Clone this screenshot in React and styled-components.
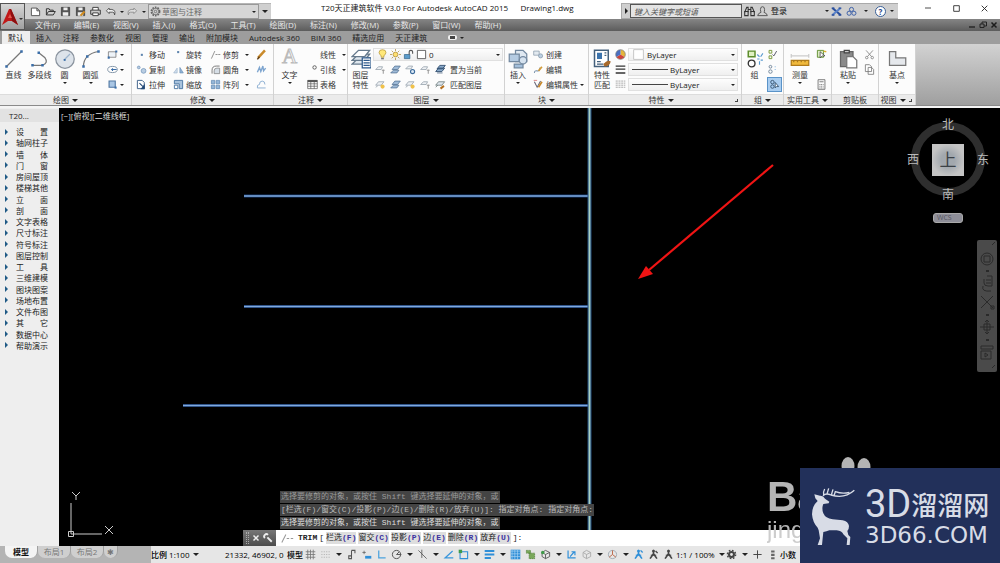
import React from "react";
import styled, { createGlobalStyle, css } from "styled-components";

const sans = `"Open Sans", "Noto Sans CJK SC", sans-serif`;
const mono = `"Liberation Mono", "Noto Sans CJK SC", monospace`;

const Global = createGlobalStyle`
  *, *::before, *::after { box-sizing: border-box; }
  html, body { margin: 0; background: #000; }
  body { font-family: ${sans}; font-size: 8px; line-height: 10px; color: #333; overflow: hidden; }
  button, input, select { font: inherit; color: inherit; margin: 0; padding: 0; border: 0; background: none; outline: 0; border-radius: 0; }
  ul { list-style: none; margin: 0; padding: 0; }
`;

/* ---------- icons ---------- */

const paper = { fill: "#fff", stroke: "#555" };
const sheets = (
  <g fill="#dfe7ee" stroke="#667a8c">
    <path d="M1 12l5-5h9l-4 5z" />
    <path d="M1 9l5-5h9l-4 5z" />
    <path d="M1 6l5-5h9l-4 5z" fill="#fff" />
  </g>
);
const person = (c) => (
  <g fill={c} stroke={c}>
    <path d="M8 2v6M8 7l-5 7M8 7l5 7" strokeWidth="2.4" fill="none" />
    <path d="M4 9h8" strokeWidth="1.5" />
    <circle cx="8" cy="3" r="1.6" />
  </g>
);
const cube = (c) => <path d="M3 5l5-3 6 3v6l-6 3-5-3zM3 5l5 3 6-3M8 8v6" fill="none" stroke={c} strokeWidth="1.3" />;

const glyphs = {
  new: <path d="M2 3h8l4 4v7H2zM10 3v4h4" {...paper} strokeWidth="1.4" />,
  open: <path d="M2 13V4h4l1 2h5v2M2 13l3-5h10l-3 5z" fill="none" stroke="#333" strokeWidth="1.4" />,
  save: (
    <g>
      <path d="M2 2h12v12H2z" fill="#555" stroke="#333" />
      <path d="M5 2h6v4H5zM4 9h8v5H4z" fill="#eee" />
    </g>
  ),
  saveas: (
    <g>
      <path d="M2 2h12v12H2z" fill="#555" stroke="#333" />
      <path d="M5 2h6v4H5zM4 9h8v5H4z" fill="#eee" />
      <path d="M8 14l6-6" stroke="#d08a1c" strokeWidth="3" />
    </g>
  ),
  print: (
    <g stroke="#333" strokeWidth="1.3">
      <path d="M4 6V2h8v4" fill="#fff" />
      <path d="M1 6h14v6H1z" fill="#ccc" />
      <path d="M4 10h8v4H4z" fill="#fff" />
    </g>
  ),
  undo: <path d="M6 3L2 7l4 4V9h5q3 0 3 4 2-7-4-8H6z" fill="#eee" stroke="#444" strokeWidth="1.2" />,
  redo: <path d="M10 3l4 4-4 4V9H5q-3 0-3 4-2-7 4-8h4z" fill="#ddd" stroke="#888" strokeWidth="1.2" />,
  gear: (
    <g fill="none" stroke="#666">
      <circle cx="8" cy="8" r="6" strokeWidth="2.4" strokeDasharray="2.4 1.4" />
      <circle cx="8" cy="8" r="4.6" strokeWidth="1.2" />
      <circle cx="8" cy="8" r="1.8" strokeWidth="1.2" />
    </g>
  ),
  gearSolid: (
    <g fill="none" stroke="#444">
      <circle cx="8" cy="8" r="3.6" strokeWidth="3" />
      <circle cx="8" cy="8" r="6" strokeWidth="2" strokeDasharray="2.4 2.3" />
    </g>
  ),
  binoculars: (
    <g fill="none" stroke="#333" strokeWidth="1.5">
      <path d="M1 9l3-7h2v7M15 9l-3-7h-2v7M6 5h4" />
      <path d="M1 8h5v6H1zM10 8h5v6h-5z" />
    </g>
  ),
  user: (
    <g fill="none" stroke="#555" strokeWidth="1.4">
      <path d="M5 5q0-4 3-4t3 4-1 4q5 2 5 5H1q0-3 5-5-1-1-1-4z" />
    </g>
  ),
  exchange: (
    <g strokeWidth="3">
      <path d="M2 3l12 10" stroke="#2a4f9c" />
      <path d="M14 3L2 13" stroke="#5a82c8" />
      <path d="M1 3h4M11 3h4M1 13h4M11 13h4" stroke="#2a4f9c" strokeWidth="2" />
    </g>
  ),
  a360: (
    <g fill="none" stroke="#3b5fa8" strokeWidth="1.4">
      <circle cx="8" cy="5" r="3" /><circle cx="4.5" cy="10.5" r="3" /><circle cx="11.500" cy="10.500" r="3" />
    </g>
  ),
  line: (
    <g>
      <path d="M2 14L14 2" stroke="#777" />
      <path d="M1 13h2v2H1zM13 1h2v2h-2z" fill="#3b6ea8" />
    </g>
  ),
  polyline: (
    <g>
      <path d="M2 13h8q5-2 2-6L7 3" stroke="#777" fill="none" />
      <path d="M1 12h2v2H1zM9 12h2v2H9zM6 2h2v2H6z" fill="#3b6ea8" />
    </g>
  ),
  circle: (
    <g>
      <circle cx="8" cy="8" r="7.400" fill="#dde3ea" stroke="#8a939e" />
      <path d="M7 9l5-5" stroke="#9db4cc" />
      <path d="M7 8h1.500v1.500H7z" fill="#3b6ea8" />
    </g>
  ),
  arc: (
    <g>
      <path d="M2 14Q2 4 14 2" stroke="#777" fill="none" />
      <path d="M1 13h2v2H1zM4 5h2v2H4zM13 1h2v2h-2z" fill="#3b6ea8" />
    </g>
  ),
  rect: (
    <g>
      <path d="M2 4h11v8H2z" fill="#eef3f8" stroke="#666" />
      <path d="M1 11h3v3H1zM12 2h3v3h-3z" fill="#3b6ea8" />
    </g>
  ),
  ellipse: (
    <g fill="none" stroke="#7b8fa3">
      <ellipse cx="8" cy="8" rx="7" ry="4.500" strokeWidth="1.300" />
      <path d="M8 6v4M6 8h8" stroke="#3b6ea8" strokeWidth="1.600" />
    </g>
  ),
  hatch: (
    <g>
      <path d="M3 3h9v9H3z" fill="#a9c6e4" stroke="#4f76a2" strokeWidth="1.600" />
      <path d="M11 11h3v3h-3z" fill="#3b6ea8" />
    </g>
  ),
  move: <path d="M7 7h3v3H7z" fill="#5d84ad" />,
  rotate: <path d="M6 3h3v3H6z" fill="#5d84ad" />,
  trim: <path d="M2 14L7 3M8 8h3M12 8h3" stroke="#888" strokeWidth="1.300" />,
  pencil: (
    <g>
      <path d="M3 13l10-11" stroke="#c98a2b" strokeWidth="3.600" />
      <path d="M2 15l3-4" stroke="#5b3a12" strokeWidth="2" />
    </g>
  ),
  copy: (
    <g fill="#b9cde2" stroke="#6a8fb6">
      <circle cx="4" cy="5" r="2" /><circle cx="11" cy="10" r="3.500" />
    </g>
  ),
  mirror: (
    <g>
      <path d="M1 13l5-7v7z" fill="#d3e1ef" stroke="#9db5cc" />
      <path d="M15 13l-5-8v8z" fill="#8fb3d7" stroke="#6d92b8" />
    </g>
  ),
  fillet: (
    <g fill="none" stroke="#777">
      <path d="M3 14V9q0-6 6-6h5" strokeWidth="1.400" /><path d="M6 14v-4q0-4 4-4h4v8z" fill="#d6dee6" />
    </g>
  ),
  explode: <path d="M2 12l3-7 2 6 3-8 1 7 3-4" fill="none" stroke="#7ea5cf" strokeWidth="2" />,
  stretch: (
    <g>
      <path d="M2 2h7l3 3v9H2z" fill="#fff" stroke="#3f628a" strokeWidth="1.400" />
      <path d="M5 6l7 7M12 9v5H8z" fill="#234a78" stroke="#234a78" strokeWidth="1.500" />
    </g>
  ),
  scale: (
    <g stroke="#45719f" strokeWidth="1.300">
      <path d="M2 2h12v12H9V7H2z" fill="#a9c3dd" /><path d="M2 9h5v5H2z" fill="#fff" />
    </g>
  ),
  array: <path d="M2 2h5v5H2zM9 2h5v5H9zM2 9h5v5H2zM9 9h5v5H9z" fill="#94b6d8" stroke="#5a83ad" />,
  offset: <path d="M2 13q-1-5 3-5 0-5 4-5t4 5M2 13h12" fill="none" stroke="#8fb0d2" strokeWidth="1.400" />,
  leader: <circle cx="11" cy="5" r="2.500" fill="none" stroke="#555" strokeWidth="1.300" />,
  table: (
    <g fill="none" stroke="#555">
      <path d="M1 2h14v12H1z" fill="#fff" /><path d="M1 3h14" strokeWidth="3" /><path d="M1 7h14M1 10.500h14M5.500 3v11M10.500 3v11" />
    </g>
  ),
  layers: (
    <g>
      {sheets}
      <path d="M9 7h7v8H9z" fill="#fff" stroke="#2e5a8c" /><path d="M10 9h5M10 11h5M10 13h5" stroke="#2e5a8c" />
    </g>
  ),
  sheetBlue: <path d="M1 13l4-4h8l-3 4zM3 8l4-5h8l-4 5z" fill="#9fbbd8" stroke="#48688a" />,
  sheetKey: (
    <g>
      <path d="M1 8l4-4h6l-2 4z" fill="#eef1f4" stroke="#8794a1" />
      <path d="M12 8v6M10 9h4" stroke="#999" strokeWidth="1.500" />
    </g>
  ),
  sheetSnow: (
    <g>
      <path d="M1 7l4-4h6l-2 4z" fill="#eef1f4" stroke="#8794a1" />
      <circle cx="11" cy="11" r="3" fill="#dce9f5" stroke="#3c6b9c" strokeWidth="1.600" />
    </g>
  ),
  sheetSun: (
    <g>
      <path d="M1 9l4-5h8l-4 5zM1 12l3-2" fill="#eef1f4" stroke="#8794a1" />
      <circle cx="11" cy="11" r="3" fill="#f0c14a" />
    </g>
  ),
  sheetStack: (
    <g>
      <path d="M1 11l4-5h9l-4 5zM3 7l4-5h8l-4 5z" fill="#8aaacb" stroke="#2e4c6d" strokeWidth="1.300" />
      <path d="M3 13h8" stroke="#2e4c6d" />
    </g>
  ),
  sheetMatch: (
    <g>
      <path d="M1 9l4-5h9l-4 5zM1 12l3-3" fill="#dfe7ee" stroke="#566" /><path d="M8 14l5-4" stroke="#b5701f" strokeWidth="3" />
    </g>
  ),
  bulb: (
    <g>
      <path d="M8 1q5 0 5 4 0 2-3 5v2H6v-2Q3 7 3 5q0-4 5-4z" fill="#ffe87a" stroke="#b08f2b" /><path d="M6 13h4v2H6z" fill="#777" />
    </g>
  ),
  sun: (
    <g stroke="#a5822d">
      <circle cx="8" cy="8" r="3.500" fill="#ffe070" />
      <path d="M8 0v3M8 13v3M0 8h3M13 8h3M2.500 2.500l2 2M11.500 11.500l2 2M13.500 2.500l-2 2M4.500 11.500l-2 2" />
    </g>
  ),
  lock: (
    <g>
      <path d="M2 8h8v6H2z" fill="#5c9ccb" stroke="#2e6189" /><path d="M9 8V4q0-2 2.500-2T14 4v3" fill="none" stroke="#555" strokeWidth="1.600" />
    </g>
  ),
  swatch: <path d="M2 2h12v12H2z" fill="#fff" stroke="#555" strokeWidth="1.300" />,
  swatchSoft: <path d="M2 2h12v12H2z" fill="#fff" stroke="#bbb" />,
  insert: (
    <g stroke="#7389a0">
      <path d="M6 1h6l3 3v6H6z" fill="#dfe8f1" />
      <path d="M1 4h8v6H1z" fill="#b4cbe2" /><circle cx="12" cy="9" r="3" fill="#d5e2ef" /><path d="M5 12h7v3H5z" fill="#a3bfdb" />
    </g>
  ),
  create: (
    <g stroke="#8294a6">
      <path d="M1 3h8v6H1z" fill="#e3eaf0" /><circle cx="11" cy="10" r="3" fill="#bcd0e3" />
    </g>
  ),
  edit: (
    <g>
      <path d="M2 13q0-4 4-3t4-5" fill="none" stroke="#7a93ad" strokeWidth="1.500" /><path d="M8 10l5-6" stroke="#d19b3a" strokeWidth="2.500" />
    </g>
  ),
  attr: (
    <g fill="none">
      <path d="M2 4l4 8 5-9" stroke="#667" strokeWidth="1.500" /><path d="M8 12l5-8" stroke="#c98a2b" strokeWidth="2.500" /><path d="M1 2h5" stroke="#c55" />
    </g>
  ),
  match: (
    <g>
      <path d="M2 1h11v13H2z" fill="#fff" stroke="#44607c" strokeWidth="1.200" />
      <path d="M4 3h4v5H4z" fill="#3c74ad" /><path d="M10 3h1.500M10 5h1.500M4 10h3M4 12h5" stroke="#44607c" />
      <path d="M9 12q4-4 6-2-1 4-5 4z" fill="#a8692a" />
    </g>
  ),
  wheel: (
    <g>
      <path d="M8 8V1a7 7 0 0 1 6 10.500z" fill="#e5b53a" /><path d="M8 8l6 3.500A7 7 0 0 1 2 11.500z" fill="#d0433a" />
      <path d="M8 8L2 11.500A7 7 0 0 1 8 1z" fill="#4a6fc0" /><circle cx="8" cy="8" r="7" fill="none" stroke="#777" />
    </g>
  ),
  weights: <path d="M1 3h14M1 7.500h14M1 13h14" stroke="#333" strokeWidth="2" />,
  types: <path d="M1 3h14M1 6h14M1 9h14M1 12h14" stroke="#888" strokeDasharray="3 1" />,
  group: (
    <g fill="none">
      <path d="M2 1h6v5H2z" fill="#dff0c2" stroke="#5b8c2a" strokeWidth="1.300" /><circle cx="5" cy="12" r="3" stroke="#333" strokeWidth="1.200" />
      <path d="M10 4l2 2M15 3l-2 3M10 8h2M15 9h-2M12 10v3" stroke="#5a9bd0" />
    </g>
  ),
  groupEdit: (
    <g fill="none">
      <path d="M3 2h4v4H3zM3 10h4v4H3z" stroke="#7a9a3a" strokeWidth="1.400" /><path d="M8 8l2 2 4-7" stroke="#556" strokeWidth="1.400" />
    </g>
  ),
  ungroup: (
    <g fill="none" stroke="#6a7f94" strokeWidth="1.300">
      <circle cx="5" cy="4" r="2" /><circle cx="5" cy="11" r="2.500" /><path d="M11 4h2M11 8h2" stroke="#9cc3e4" />
    </g>
  ),
  groupSel: (
    <g fill="none" stroke="#34506c" strokeWidth="1.300">
      <circle cx="5" cy="4.500" r="2.500" /><circle cx="5" cy="11" r="2.500" /><path d="M9 5l5 6H11l-2 2z" fill="#fff" />
    </g>
  ),
  measure: (
    <g>
      <path d="M1 4v3M1 5.500h14M15 4v3" stroke="#ccc" /><path d="M1 9h14v4H1z" fill="#f0b93c" stroke="#b07b1b" />
      <path d="M3 9v1.500M6 9v1.500M9 9v1.500M12 9v1.500" stroke="#a87a20" />
    </g>
  ),
  select: (
    <g>
      <path d="M2 2h9v10H2z" fill="#dcecc4" stroke="#5b8c2a" strokeWidth="1.300" /><path d="M6 4l7 6H9l-3 3z" fill="#fff" stroke="#333" /><path d="M11 3l4 1" stroke="#e0b030" strokeWidth="2" />
    </g>
  ),
  calc: (
    <g fill="none" stroke="#666" strokeWidth="1.200">
      <path d="M3 1h10v14H3zM5 4h6" /><path d="M5 8h6M5 10.500h6M5 13h6" strokeDasharray="1.500 1" />
    </g>
  ),
  paste: (
    <g>
      <path d="M2 2h10v12H2z" fill="#8a8a8a" stroke="#666" /><path d="M5 1h4v2H5z" fill="#ccc" stroke="#444" /><path d="M7 6h5l3 3v6H7z" fill="#fff" stroke="#777" />
    </g>
  ),
  cut: (
    <g fill="none" stroke="#888" strokeWidth="1.300">
      <path d="M3 2l8 9M13 2L5 11" /><circle cx="4" cy="12.500" r="1.800" /><circle cx="12" cy="12.500" r="1.800" />
    </g>
  ),
  copyClip: <path d="M2 1h6l3 3v7H2zM6 5h5l3 3v7H6z" fill="#fff" stroke="#777" strokeWidth="1.200" />,
  base: <path d="M2 2h5v5h8v6H2z" fill="#e5e8ec" stroke="#777" />,
  grid: <path d="M4 1v14M8 1v14M12 1v14M1 4h14M1 8h14M1 12h14" stroke="#777" strokeWidth="1.200" />,
  dots: <path d="M2 4h12M2 8h12M2 12h12" stroke="#aaa" strokeWidth="1.300" strokeDasharray="1.500 2" />,
  infer: <path d="M8 2h5v4M8 2v8M8 10H4v4h4z" fill="none" stroke="#555" strokeWidth="1.500" />,
  dynamic: (
    <g>
      <path d="M2 5h5M4.500 2.500v5" stroke="#555" /><path d="M6 10h9v4H6z" fill="#2f8fd8" />
    </g>
  ),
  ortho: <path d="M4 2v11h10" fill="none" stroke="#4ba2dd" strokeWidth="1.800" />,
  polar: (
    <g fill="none" stroke="#555" strokeWidth="1.400">
      <circle cx="8" cy="8" r="6" /><path d="M8 8h7M8 8l4-4" />
    </g>
  ),
  iso: <path d="M7 1v12M2 2l12 12" stroke="#555" strokeWidth="1.200" />,
  track: <path d="M14 3L3 13h12" fill="none" stroke="#3b97dc" strokeWidth="1.800" />,
  osnap: (
    <g>
      <path d="M3 4h11v10H3z" fill="none" stroke="#2f8fd8" strokeWidth="1.600" /><path d="M1 1h5v5H1z" fill="#3f9a4a" />
    </g>
  ),
  lwt: <path d="M1 3h14M1 8h14M1 13h9" stroke="#2f8fd8" strokeWidth="3" />,
  transparency: (
    <g>
      <path d="M1 1h14v14H1z" fill="#2f8fd8" /><path d="M3 1v14M7 1v14M11 1v14M1 3h14M1 7h14M1 11h14" stroke="#a9d3f2" />
    </g>
  ),
  cycle: <path d="M2 2h6v4H2zM6 6h8v8H6z" fill="#79a85a" stroke="#4c7a34" strokeDasharray="2 1" />,
  osnap3: (
    <g>{cube("#555")}<circle cx="4" cy="5" r="2.500" fill="#3f9a4a" /></g>
  ),
  ducs: <path d="M3 2v11h11M6 11l6-7M8 4h5v5" fill="none" stroke="#2f8fd8" strokeWidth="1.700" />,
  filter: cube("#aaa"),
  gizmo: (
    <g fill="none">
      <circle cx="8" cy="8" r="6" stroke="#8b97a3" /><path d="M8 8V2M8 8l5 4M8 8l-5 4" stroke="#bd6a4b" strokeWidth="1.400" />
    </g>
  ),
  annoBlue: (
    <g>{person("#2f8fd8")}<path d="M11 2l3 3" stroke="#2f8fd8" strokeWidth="2" /></g>
  ),
  annoAuto: (
    <g>{person("#444")}<path d="M11 3l3 3" stroke="#444" strokeWidth="2" /></g>
  ),
  anno: person("#444"),
  plus: <path d="M8 2v12M2 8h12" stroke="#444" strokeWidth="1.400" />,
  units: <path d="M6 2h5v3H6zM6 7h5v3H6zM6 12h5v3H6z" fill="#666" />,
  close: <path d="M3 3l10 10M13 3L3 13" stroke="currentColor" strokeWidth="1.600" />,
  closeBold: <path d="M3 3l10 10M13 3L3 13" stroke="currentColor" strokeWidth="3" />,
  max: <path d="M3 3h10v10H3z" fill="none" stroke="currentColor" strokeWidth="1.500" />,
  min: <path d="M2 8h12" stroke="currentColor" strokeWidth="1.600" />,
  minLow: <path d="M2 12h12" stroke="currentColor" strokeWidth="2.500" />,
  restore: <path d="M2 6h8v7H2zM6 6V2h9v8h-5" fill="none" stroke="currentColor" strokeWidth="1.800" />,
  wrench: <path d="M14 14L7 7M8 3a3.500 3.500 0 1 0-5 5" fill="none" stroke="#eee" strokeWidth="3" />,
  trimCmd: <path d="M1 13L6 3M7 8h3M12 8h3" stroke="#999" strokeWidth="1.300" />,
};

const Glyph = styled.svg`
  width: ${(p) => p.$s}px;
  height: ${(p) => p.$s}px;
  flex: none;
  display: block;
`;
const Icon = ({ n, s = 11 }) => (
  <Glyph $s={s} viewBox="0 0 16 16" aria-hidden="true">{glyphs[n]}</Glyph>
);

const Caret = styled.i`
  flex: none;
  width: 0;
  height: 0;
  border: ${(p) => (p.$big ? 3 : 2)}px solid transparent;
  border-top-color: #222;
  border-bottom: 0;
`;

/* ---------- title and menus ---------- */

const Shell = styled.div`
  display: flex;
  flex-direction: column;
  height: 100vh;
  background: #eee;
`;
const Header = styled.header`
  display: grid;
  grid-template-columns: 25px 1fr;
  grid-template-rows: 19px 12px;
  background: linear-gradient(#fff 0 19px, #6e6e6e 19px);
`;
const AppButton = styled.button`
  grid-row: 1 / 3;
  margin: 3px 0 1px;
  border: 1px solid #555;
  background: linear-gradient(#d6d6d6, #a0a0a0);
  display: flex;
  align-items: center;
  justify-content: center;
`;
const TitleRow = styled.div`
  display: flex;
  min-width: 0;
  padding-top: 3px;
`;
const QuickBar = styled.div`
  display: flex;
  align-items: center;
  background: #cfcfcf;
  padding-left: 3px;
  border-top: 1px solid #b5b5b5;
`;
const QuickButton = styled.button`
  width: ${(p) => p.$w || 15}px;
  height: 15px;
  display: flex;
  align-items: center;
  justify-content: center;
`;
const Workspace = styled.label`
  display: flex;
  align-items: center;
  gap: 1px;
  width: 111px;
  height: 15px;
  margin-left: 1px;
  padding: 0 2px 0 1px;
  border: 1px solid #999;
  background: #d6d6d6;
  color: #666;
`;
const PlainSelect = styled.select`
  appearance: none;
  flex: 1;
  min-width: 0;
  height: 10px;
  line-height: 10px;
`;
const Title = styled.h1`
  flex: 1;
  min-width: 0;
  margin: 0 0 0 50px;
  font-size: 8px;
  font-weight: 400;
  line-height: 10px;
  white-space: pre;
  overflow: hidden;
  color: #111;
`;
const InfoCenter = styled.div`
  display: flex;
  align-items: center;
  width: 277px;
  background: #cfcfcf;
  border: 1px solid #aaa;
  border-right: 0;
`;
const SearchBox = styled.input`
  width: 112px;
  height: 14px;
  padding: 0 3px;
  background: #e4e4e4;
  border: 1px solid #555;
  font-style: italic;
  &::placeholder { color: #555; opacity: 1; }
`;
const SearchToggle = styled.button`
  width: 8px;
  display: flex;
  justify-content: center;
`;
const RightCaret = styled.i`
  width: 0;
  height: 0;
  flex: none;
  border: 3px solid transparent;
  border-left-color: ${(p) => p.$c || "#222"};
  border-right: 0;
`;
const SignIn = styled.button`
  display: flex;
  align-items: center;
  gap: 3px;
  width: 72px;
  color: #111;
  & > :last-child { margin-left: auto; }
`;
const HelpMark = styled.span`
  width: 11px;
  height: 11px;
  border: 1px solid #3a5f96;
  border-radius: 50%;
  background: #fff;
  color: #1f4684;
  font-weight: 700;
  line-height: 9px;
  text-align: center;
`;
const Windowing = styled.div`
  display: flex;
  align-items: flex-start;
  width: 102px;
  padding-left: 16px;
  color: #222;
`;
const WindowButton = styled.button`
  width: 28px;
  height: 10px;
  display: flex;
  justify-content: center;
  align-items: center;
`;
const MenuBar = styled.nav`
  display: flex;
  gap: 14px;
  padding: 0 1px 0 10px;
  line-height: 12px;
  color: #e8e8e8;
  background: linear-gradient(#858585, #5c5c5c);
`;
const MenuButton = styled.button`
  line-height: 12px;
  white-space: nowrap;
`;
const DocButtons = styled.div`
  margin-left: auto;
  display: flex;
  align-items: center;
  color: #1c1c1c;
`;
const DocButton = styled.button`
  width: 11px;
  display: flex;
  justify-content: center;
`;
const TabBar = styled.nav`
  display: flex;
  align-items: center;
  gap: 11px;
  height: 13px;
  flex: none;
  padding-left: 2px;
  background: #9d9d9d;
`;
const Tab = styled.button`
  height: 13px;
  line-height: 13px;
  color: #222;
  white-space: nowrap;
  ${(p) => p.$active && css`
    background: #eee;
    padding: 0 6px;
    margin-right: -5px;
  `}
`;
const TabToggle = styled.button`
  display: flex;
  align-items: center;
  gap: 3px;
  margin-left: 10px;
`;
const TabToggleBox = styled.span`
  width: 9px;
  height: 5px;
  background: #444;
  border: 1px solid #eee;
  border-width: 1px 2px;
  border-radius: 2px;
`;

/* ---------- ribbon ---------- */

const Ribbon = styled.div`
  display: flex;
  flex: none;
  height: 64px;
  padding-bottom: 3px;
  background: linear-gradient(#eee 0 61px, #8a8a8a 61px 62px, #f4f4f4 62px);
`;
const PanelBox = styled.section`
  display: flex;
  flex-direction: column;
  flex: none;
  width: ${(p) => p.$w}px;
  border-right: 1px solid #d2d2d2;
`;
const PanelBody = styled.div`
  flex: 1;
  display: flex;
  padding-top: 3px;
  background: #fcfcfc;
`;
const PanelTitle = styled.button`
  position: relative;
  display: flex;
  align-items: center;
  justify-content: center;
  gap: 3px;
  height: 11px;
  padding-right: ${(p) => (p.$launcher ? 8 : 0)}px;
  background: #ebebeb;
  border-top: 1px solid #dcdcdc;
  line-height: 10px;
  white-space: nowrap;
`;
const Launcher = styled.span`
  position: absolute;
  right: 3px;
  bottom: 3px;
  width: 3px;
  height: 3px;
  border: solid #444;
  border-width: 0 1px 1px 0;
`;
const RibbonFill = styled.div`
  flex: 1;
  background: linear-gradient(#d2d2d2, #9f9f9f);
`;
const Big = styled.button`
  display: flex;
  flex-direction: column;
  align-items: center;
  flex: none;
  width: ${(p) => p.$w || 25}px;
  padding-top: 1px;
  color: #333;
`;
const BigIcon = styled.span`
  display: flex;
  align-items: center;
  height: 22px;
`;
const BigLabel = styled.span`
  line-height: 10px;
  white-space: pre-line;
  margin-bottom: 2px;
`;
const Letter = styled.span`
  font-family: "Liberation Serif", serif;
  font-size: 21px;
  line-height: 16px;
  margin-bottom: 6px;
  color: #fff;
  -webkit-text-stroke: 1px #bbb;
`;
const ToolGrid = styled.div`
  display: grid;
  grid-template-columns: ${(p) => p.$cols};
  grid-auto-rows: 15px;
  align-content: start;
  padding-left: ${(p) => p.$pad || 0}px;
`;
const Tool = styled.button`
  display: flex;
  align-items: center;
  gap: 2px;
  width: max-content;
  white-space: nowrap;
  color: #333;
  ${(p) => p.$on && css`
    width: 15px;
    justify-content: center;
    background: #a9cdf0;
    border: 1px solid #5a93c8;
  `}
`;
const ToolText = styled.span`
  min-width: 20px;
  text-align: left;
  ${(p) => p.$inset && css`
    min-width: 33px;
    padding-left: 13px;
  `}
`;
const Stack = styled.div`
  flex: 1;
  min-width: 0;
  display: flex;
  flex-direction: column;
`;
const Combo = styled.label`
  display: flex;
  align-items: center;
  gap: 2px;
  height: 13px;
  margin: ${(p) => (p.$tight ? "1px 3px 1px 0" : "1px 1px 1px 0")};
  padding: 0 2px 0 3px;
  background: linear-gradient(#fdfdfd, #efefef);
  border: 1px solid #e0e0e0;
  color: #222;
`;
const LayerTools = styled.div`
  display: flex;
  align-items: center;
  height: 15px;
  gap: 4px;
  padding-left: 2px;
`;
const Rule = styled.span`
  width: 36px;
  height: 1px;
  background: #444;
`;
const PropRow = styled.div`
  display: grid;
  grid-template-columns: 13px 1fr;
  align-items: center;
  height: 15px;
`;

/* ---------- workspace ---------- */

const Work = styled.div`
  flex: 1;
  min-height: 0;
  display: flex;
`;
const Palette = styled.aside`
  width: 59px;
  flex: none;
  background: #eee;
  color: #222;
`;
const PaletteHead = styled.h2`
  margin: 1px 0 4px;
  height: 13px;
  padding-left: 9px;
  font-size: 8px;
  font-weight: 400;
  line-height: 13px;
  background: #e2e2e2;
`;
const PaletteList = styled.ul`
  display: flex;
  flex-direction: column;
  justify-content: space-between;
  height: 225px;
`;
const PaletteItem = styled.button`
  display: flex;
  align-items: center;
  gap: 8px;
  height: 11px;
  padding-left: 5px;
  line-height: 11px;
  white-space: pre;
`;
const Canvas = styled.main`
  position: relative;
  flex: 1;
  min-width: 0;
  background: #000;
  display: flex;
  flex-direction: column;
  justify-content: flex-end;
`;
const Drawing = styled.svg`
  position: absolute;
  inset: 0;
  width: 100%;
  height: 100%;
`;
const ViewLabel = styled.div`
  position: absolute;
  top: 3px;
  left: 2px;
  color: #ddd;
`;
const Compass = styled.div`
  position: absolute;
  top: 10px;
  right: 11px;
  width: 82px;
  height: 84px;
  display: grid;
  grid-template-columns: 12px 1fr 12px;
  grid-template-rows: 14px 1fr 14px;
  place-items: center;
  font-size: 12px;
  line-height: 14px;
  color: #bbb;
  & > :first-child { grid-column: 1 / 4; }
  & > :last-child { grid-column: 1 / 4; }
  &::before {
    content: "";
    position: absolute;
    top: 4px;
    left: 4px;
    width: 74px;
    height: 74px;
    border: 8px solid #2e2e2e;
    border-radius: 50%;
  }
  & > * { position: relative; }
`;
const TopFace = styled.button`
  width: 32px;
  height: 32px;
  background: radial-gradient(#a2a8ae 30%, #c4c4c4 70%);
  font-size: 17px;
  line-height: 30px;
  color: #3c4248;
`;
const Wcs = styled.button`
  position: absolute;
  top: 105px;
  right: 37px;
  width: 30px;
  height: 10px;
  padding-left: 3px;
  background: #8e8e98;
  border: 1px solid #aaa;
  border-radius: 3px;
  font-size: 7px;
  line-height: 8px;
  text-align: left;
  color: #55555f;
`;
const NavBar = styled.div`
  position: absolute;
  top: 132px;
  right: 3px;
  width: 20px;
  height: 132px;
  background: #4a4a4a;
  border-radius: 2px;
`;
const History = styled.div`
  position: relative;
  display: flex;
  flex-direction: column;
  align-items: flex-start;
  gap: 1px;
  margin: 0 0 1px 221px;
  font-family: ${mono};
`;
const HistoryLine = styled.p`
  margin: 0;
  padding: 0 1px;
  height: 12px;
  line-height: 12px;
  background: #444;
  color: ${(p) => p.$c};
  white-space: pre;
`;
const CommandRow = styled.form`
  position: relative;
  display: flex;
  height: 16px;
  flex: none;
  margin-left: 184px;
`;
const CommandHandle = styled.div`
  width: 33px;
  display: flex;
  align-items: center;
  justify-content: space-between;
  padding: 0 3px;
  background: linear-gradient(#777, #4c4c4c);
  color: #eee;
`;
const Grip = styled.span`
  width: 3px;
  height: 12px;
  border: dotted #aaa;
  border-width: 0 1px;
`;
const CommandText = styled.div`
  flex: 1;
  min-width: 0;
  display: flex;
  align-items: center;
  gap: 2px;
  padding-left: 5px;
  background: #fff;
  color: #222;
  font-family: ${mono};
`;
const CommandName = styled.b`
  margin-left: 2px;
`;
const Keyword = styled.button`
  height: 12px;
  line-height: 12px;
  background: #dedede;
  white-space: nowrap;
  & > b { color: #3c32a0; }
`;
const CommandInput = styled.input`
  flex: 1;
  min-width: 0;
`;

/* ---------- status bar ---------- */

const Status = styled.footer`
  display: flex;
  flex: none;
  height: 17px;
  background: #e6e6e6;
  color: #222;
`;
const Layouts = styled.div`
  display: flex;
  flex: none;
  width: 151px;
  padding-left: 5px;
  background: #b4b4b4;
`;
const LayoutTab = styled.button`
  width: ${(p) => p.$w || 33}px;
  height: 12px;
  line-height: 12px;
  background: ${(p) => (p.$active ? "#f4f4f4" : "#cfcfcf")};
  font-weight: ${(p) => (p.$active ? 700 : 400)};
  color: ${(p) => (p.$active ? "#111" : "#777")};
  border-right: 1px solid #a0a0a0;
  border-radius: 0 0 7px 7px;
`;
const StatusText = styled.button`
  display: flex;
  align-items: center;
  gap: 4px;
  width: ${(p) => p.$w}px;
  flex: none;
  white-space: nowrap;
  color: #000;
  font-weight: 500;
`;
const StatusTool = styled.button`
  flex: none;
  width: ${(p) => (p.$arrow ? 11 : 15)}px;
  display: flex;
  align-items: center;
  justify-content: center;
`;

/* ---------- watermarks ---------- */

const Badge = styled.div`
  position: fixed;
  right: 0;
  bottom: 0;
  width: 200px;
  height: 95px;
  display: flex;
  gap: 9px;
  padding: 18px 0 0 11px;
  background: #22305a;
  color: #d8dce6;
`;
const Stag = styled.svg`
  width: 45px;
  height: 60px;
  flex: none;
`;
const BadgeName = styled.div`
  display: flex;
  align-items: center;
  height: 36px;
  line-height: 36px;
  font-family: Roboto, sans-serif;
  font-size: 38px;
  & > span { font-family: "Noto Sans CJK SC", sans-serif; font-size: 26px; font-weight: 500; }
`;
const BadgeSite = styled.div`
  font-family: "DejaVu Sans", sans-serif;
  font-size: 23px;
  line-height: 26px;
`;
const Baidu = styled.div`
  position: fixed;
  right: 120px;
  bottom: 14px;
  width: 113px;
  height: 92px;
  overflow: hidden;
  font-family: "Liberation Sans", sans-serif;
  color: rgba(200, 200, 200, 0.9);
`;
const BaiduName = styled.div`
  margin-top: 19px;
  font-size: 42px;
  font-weight: 700;
  line-height: 42px;
`;
const BaiduSub = styled.div`
  font-size: 24px;
  line-height: 24px;
`;
const Paw = styled.svg`
  position: absolute;
  top: 0;
  left: 74px;
  width: 32px;
  height: 24px;
`;

/* ---------- data ---------- */

const menus = ["文件(F)", "编辑(E)", "视图(V)", "插入(I)", "格式(O)", "工具(T)", "绘图(D)", "标注(N)", "修改(M)", "参数(P)", "窗口(W)", "帮助(H)"];
const tabs = ["默认", "插入", "注释", "参数化", "视图", "管理", "输出", "附加模块", "Autodesk 360", "BIM 360", "精选应用", "天正建筑"];
const paletteItems = ["设　　置", "轴网柱子", "墙　　体", "门　　窗", "房间屋顶", "楼梯其他", "立　　面", "剖　　面", "文字表格", "尺寸标注", "符号标注", "图层控制", "工　　具", "三维建模", "图块图案", "场地布置", "文件布图", "其　　它", "数据中心", "帮助演示"];
const modifyTools = [
  ["move", "移动"], ["rotate", "旋转"], ["trim", "修剪", true], ["pencil"],
  ["copy", "复制"], ["mirror", "镜像"], ["fillet", "圆角", true], ["explode"],
  ["stretch", "拉伸"], ["scale", "缩放"], ["array", "阵列", true], ["offset"],
];
const statusTools = ["grid", "dots", "▾", "infer", "dynamic", "ortho", "polar", "▾", "iso", "▾", "track", "osnap", "▾", "lwt", "▾", "transparency", "cycle", "osnap3", "▾", "ducs", "filter", "▾", "gizmo", "▾", "annoBlue", "annoAuto", "anno"];
const keywords = [["栏选", "F"], ["窗交", "C"], ["投影", "P"], ["边", "E"], ["删除", "R"], ["放弃", "U"]];

/* ---------- parts ---------- */

const Panel = ({ title, w, caret = true, launcher, children }) => (
  <PanelBox $w={w}>
    <PanelBody>{children}</PanelBody>
    <PanelTitle $launcher={launcher}>
      {title}
      {caret && <Caret $big />}
      {launcher && <Launcher />}
    </PanelTitle>
  </PanelBox>
);

const BigTool = ({ icon, label, w, s = 20, arrow, children }) => (
  <Big $w={w}>
    <BigIcon>{children || <Icon n={icon} s={s} />}</BigIcon>
    <BigLabel>{label}</BigLabel>
    {arrow && <Caret />}
  </Big>
);

const SmallTool = ({ icon, label, arrow, on }) => (
  <Tool $on={on} aria-label={label || icon}>
    {icon && <Icon n={icon} />}
    {label && <ToolText $inset={!icon}>{label}</ToolText>}
    {arrow && <Caret />}
  </Tool>
);

const StatusItem = ({ n }) =>
  n === "▾" ? (
    <StatusTool $arrow aria-label="更多"><Caret $big /></StatusTool>
  ) : (
    <StatusTool aria-label={n}><Icon n={n} /></StatusTool>
  );

function TopArea() {
  return (
    <Header>
      <AppButton aria-label="应用程序菜单">
        <svg width="21" height="20" viewBox="0 0 21 20">
          <path d="M0 18L7 2h2l7 16-6-4H6z" fill="#c01818" />
          <path d="M8 2l1 0 7 16-6-4z" fill="#8d0f10" />
          <path d="M6 11h4l-2-4z" fill="#e25a50" />
          <path d="M17 11h4l-2 2z" fill="#333" />
        </svg>
      </AppButton>
      <TitleRow>
        <QuickBar>
          {["new", "open", "save", "saveas", "print", "undo"].map((n) => (
            <QuickButton key={n} aria-label={n}><Icon n={n} /></QuickButton>
          ))}
          <QuickButton $w={7} aria-label="放弃列表"><Caret /></QuickButton>
          <QuickButton aria-label="redo"><Icon n="redo" /></QuickButton>
          <QuickButton $w={7} aria-label="重做列表"><Caret /></QuickButton>
          <Workspace>
            <Icon n="gear" />
            <PlainSelect aria-label="工作空间"><option>草图与注释</option></PlainSelect>
            <Caret />
          </Workspace>
          <QuickButton $w={12} aria-label="自定义"><Caret $big /></QuickButton>
        </QuickBar>
        <Title>{"T20天正建筑软件 V3.0 For Autodesk AutoCAD 2015      Drawing1.dwg"}</Title>
        <InfoCenter>
          <SearchToggle aria-label="折叠"><RightCaret /></SearchToggle>
          <SearchBox aria-label="搜索" placeholder="键入关键字或短语" />
          <QuickButton aria-label="搜索"><Icon n="binoculars" /></QuickButton>
          <SignIn><Icon n="user" />登录<Caret /></SignIn>
          <QuickButton aria-label="Exchange"><Icon n="exchange" /></QuickButton>
          <QuickButton aria-label="A360"><Icon n="a360" /></QuickButton>
          <QuickButton $w={14} aria-label="更多"><Caret /></QuickButton>
          <QuickButton aria-label="帮助"><HelpMark>?</HelpMark></QuickButton>
          <QuickButton $w={8} aria-label="帮助菜单"><Caret /></QuickButton>
        </InfoCenter>
        <Windowing>
          <WindowButton aria-label="最小化"><Icon n="min" s={8} /></WindowButton>
          <WindowButton aria-label="最大化"><Icon n="max" s={9} /></WindowButton>
          <WindowButton aria-label="关闭"><Icon n="close" s={9} /></WindowButton>
        </Windowing>
      </TitleRow>
      <MenuBar>
        {menus.map((m) => <MenuButton key={m}>{m}</MenuButton>)}
        <DocButtons>
          <DocButton aria-label="最小化图形"><Icon n="minLow" s={8} /></DocButton>
          <DocButton aria-label="还原图形"><Icon n="restore" s={8} /></DocButton>
          <DocButton aria-label="关闭图形"><Icon n="closeBold" s={8} /></DocButton>
        </DocButtons>
      </MenuBar>
    </Header>
  );
}

function RibbonArea() {
  return (
    <Ribbon>
      <Panel title="绘图" w={132}>
        <BigTool icon="line" label="直线" w={27} />
        <BigTool icon="polyline" label="多段线" />
        <BigTool icon="circle" label="圆" arrow />
        <BigTool icon="arc" label="圆弧" arrow w={27} />
        <ToolGrid $cols="auto" $pad={3}>
          {["rect", "ellipse", "hatch"].map((n) => <SmallTool key={n} icon={n} arrow />)}
        </ToolGrid>
      </Panel>
      <Panel title="修改" w={142}>
        <ToolGrid $cols="37px 37px 46px 14px" $pad={4}>
          {modifyTools.map(([i, l, a]) => <SmallTool key={i} icon={i} label={l} arrow={a} />)}
        </ToolGrid>
      </Panel>
      <Panel title="注释" w={74}>
        <BigTool label="文字" arrow w={31}><Letter>A</Letter></BigTool>
        <ToolGrid $cols="auto" $pad={2}>
          <SmallTool label="线性" arrow />
          <SmallTool icon="leader" label="引线" arrow />
          <SmallTool icon="table" label="表格" />
        </ToolGrid>
      </Panel>
      <Panel title="图层" w={157}>
        <BigTool icon="layers" label={"图层\n特性"} />
        <Stack>
          <Combo>
            <Icon n="bulb" /><Icon n="sun" /><Icon n="lock" /><Icon n="swatch" />
            <PlainSelect aria-label="图层"><option>0</option></PlainSelect>
            <Caret />
          </Combo>
          <LayerTools>
            {["sheetKey", "sheetBlue", "sheetSnow", "sheetKey", "sheetStack"].map((n, i) => (
              <Tool key={i} aria-label={n}><Icon n={n} /></Tool>
            ))}
            <Tool>置为当前</Tool>
          </LayerTools>
          <LayerTools>
            {["sheetSun", "sheetBlue", "sheetSun", "sheetKey", "sheetMatch"].map((n, i) => (
              <Tool key={i} aria-label={n}><Icon n={n} /></Tool>
            ))}
            <Tool>匹配图层</Tool>
          </LayerTools>
        </Stack>
      </Panel>
      <Panel title="块" w={84}>
        <BigTool icon="insert" label="插入" arrow w={26} />
        <ToolGrid $cols="auto" $pad={2}>
          <SmallTool icon="create" label="创建" />
          <SmallTool icon="edit" label="编辑" />
          <SmallTool icon="attr" label="编辑属性" arrow />
        </ToolGrid>
      </Panel>
      <Panel title="特性" w={153} launcher>
        <BigTool icon="match" label={"特性\n匹配"} w={26} />
        <Stack>
          <PropRow>
            <Icon n="wheel" />
            <Combo $tight>
              <Icon n="swatchSoft" s={13} />
              <PlainSelect aria-label="颜色"><option>ByLayer</option></PlainSelect>
              <Caret />
            </Combo>
          </PropRow>
          <PropRow>
            <Icon n="weights" />
            <Combo $tight>
              <Rule />
              <PlainSelect aria-label="线宽"><option>ByLayer</option></PlainSelect>
              <Caret />
            </Combo>
          </PropRow>
          <PropRow>
            <Icon n="types" />
            <Combo $tight>
              <Rule />
              <PlainSelect aria-label="线型"><option>ByLayer</option></PlainSelect>
              <Caret />
            </Combo>
          </PropRow>
        </Stack>
      </Panel>
      <Panel title="组" w={42}>
        <BigTool icon="group" label="组" s={18} />
        <ToolGrid $cols="15px">
          <SmallTool icon="groupEdit" /><SmallTool icon="ungroup" /><SmallTool icon="groupSel" on />
        </ToolGrid>
      </Panel>
      <Panel title="实用工具" w={48}>
        <BigTool icon="measure" label="测量" arrow w={32} />
        <ToolGrid $cols="14px">
          <SmallTool icon="select" /><span /><SmallTool icon="calc" />
        </ToolGrid>
      </Panel>
      <Panel title="剪贴板" w={47} caret={false}>
        <BigTool icon="paste" label="粘贴" arrow w={32} />
        <ToolGrid $cols="14px">
          <SmallTool icon="cut" /><SmallTool icon="copyClip" />
        </ToolGrid>
      </Panel>
      <Panel title="视图" w={37} launcher>
        <BigTool icon="base" label="基点" arrow w={36} />
      </Panel>
      <RibbonFill />
    </Ribbon>
  );
}

function ModelSpace() {
  return (
    <Canvas>
      <Drawing viewBox="59 108 941 438" preserveAspectRatio="xMinYMin slice">
        <g fill="none">
          <path d="M244 196H589M244 306.500H589M183 405.500H589" stroke="#173a70" strokeWidth="3" />
          <path d="M244 196H589M244 306.500H589M183 405.500H589" stroke="#7fa9dc" strokeWidth="1.400" />
          <path d="M589.500 108V530" stroke="#244f80" strokeWidth="4" />
          <path d="M589.500 108V530" stroke="#a9cfc0" strokeWidth="1.800" />
          <path d="M773 165L649 270" stroke="#f01414" strokeWidth="2.200" />
          <path d="M638 279l8-13 7 8z" fill="#f01414" />
          <path d="M71 503v31h31M68.500 531.500h5v5h-5z" stroke="#ccc" />
          <path d="M105 526l8 8M113 526l-8 8M72 492l4 4 4-4M76 496v4" stroke="#ccc" />
        </g>
      </Drawing>
      <ViewLabel>[−][俯视][二维线框]</ViewLabel>
      <Compass>
        <span>北</span>
        <span>西</span>
        <TopFace>上</TopFace>
        <span>东</span>
        <span>南</span>
      </Compass>
      <Wcs>WCS</Wcs>
      <NavBar>
        <svg width="20" height="132" viewBox="0 0 20 132" fill="none" stroke="#2a2a2a" strokeWidth="1">
          <circle cx="10" cy="19" r="6" /><path d="M7 16h6v6H7z" />
          <path d="M9 31h3M9 75h3M9 100h3" strokeWidth="2" />
          <path d="M7 39v4q0 3 4 3h4V36h-5M6 46q-2 6 8 5M9 40h5M9 43h5" />
          <path d="M4 56l12 12M16 56L4 68M14 66h3v3h-3z" />
          <path d="M10 80v14M3 87h14M8 82l2-2 2 2M8 92l2 2 2-2M7 84h6v6H7z" />
          <path d="M4 106h12v3H4zM4 111h10v8H4zM8 113v4l3-2z" />
          <path d="M15 5l3-3M15 128l3-3" />
        </svg>
      </NavBar>
      <History>
        <HistoryLine $c="#999">选择要修剪的对象，或按住 Shift 键选择要延伸的对象，或</HistoryLine>
        <HistoryLine $c="#bbb">[栏选(F)/窗交(C)/投影(P)/边(E)/删除(R)/放弃(U)]: 指定对角点: 指定对角点:</HistoryLine>
        <HistoryLine $c="#ddd">选择要修剪的对象，或按住 Shift 键选择要延伸的对象，或</HistoryLine>
      </History>
      <CommandRow onSubmit={(e) => e.preventDefault()}>
        <CommandHandle>
          <Grip /><Icon n="closeBold" s={8} /><Icon n="wrench" s={10} />
        </CommandHandle>
        <CommandText>
          <Icon n="trimCmd" s={13} />
          <CommandName>TRIM</CommandName>
          <span>[</span>
          {keywords.map(([t, k]) => (
            <Keyword type="button" key={k}>{t}<b>({k})</b></Keyword>
          ))}
          <span>]:</span>
          <CommandInput aria-label="命令" />
        </CommandText>
      </CommandRow>
    </Canvas>
  );
}

export default function App() {
  return (
    <Shell>
      <Global />
      <TopArea />
      <TabBar>
        {tabs.map((t, i) => <Tab key={t} $active={i === 0}>{t}</Tab>)}
        <TabToggle aria-label="最小化功能区"><TabToggleBox /><Caret /></TabToggle>
      </TabBar>
      <RibbonArea />
      <Work>
        <Palette>
          <PaletteHead>T20...</PaletteHead>
          <PaletteList>
            {paletteItems.map((t) => (
              <li key={t}><PaletteItem><RightCaret $c="#1f5a86" />{t}</PaletteItem></li>
            ))}
          </PaletteList>
        </Palette>
        <ModelSpace />
      </Work>
      <Status>
        <Layouts>
          <LayoutTab $active>模型</LayoutTab>
          <LayoutTab>布局1</LayoutTab>
          <LayoutTab>布局2</LayoutTab>
          <LayoutTab $w={14}>✱</LayoutTab>
        </Layouts>
        <StatusText $w={74}>比例 1:100<Caret $big /></StatusText>
        <StatusText $w={62}>21332, 46902, 0</StatusText>
        <StatusText $w={16}>模型</StatusText>
        {statusTools.map((n, i) => <StatusItem key={i} n={n} />)}
        <StatusText $w={48}>1:1 / 100%<Caret $big /></StatusText>
        {["gearSolid", "▾", "plus", "units"].map((n) => <StatusItem key={n} n={n} />)}
        <StatusText $w={20}>小数</StatusText>
      </Status>
      <Baidu>
        <Paw viewBox="0 0 32 24"><ellipse cx="7" cy="9" rx="6.500" ry="9" fill="#b4b4b4" /><ellipse cx="23" cy="10" rx="6.500" ry="9" fill="#b4b4b4" /></Paw>
        <BaiduName>Bai</BaiduName>
        <BaiduSub>jingyan</BaiduSub>
      </Baidu>
      <Badge>
        <Stag viewBox="185 105 135 180">
          <path
            d="M195 130L212 134Q222 133 227 143L240 152L238 157L222 159Q216 172 222 187Q228 202 250 205L280 208Q297 212 299 225Q299 235 294 240L297 252L303 258L301 282L292 282L294 262L282 250Q278 240 262 238L240 238Q232 242 222 243L220 262L218 282L205 282L212 262L208 238L205 230Q190 215 188 190Q188 165 205 150L198 142Z"
            fill="#d8dce6"
          />
          <path
            d="M221 134Q230 125 245 132Q285 145 315 118M223 133Q220 125 226 114M233 129L238 112M246 132L251 115M254 134L258 122Q280 130 300 124"
            fill="none" stroke="#d8dce6" strokeWidth="4"
          />
        </Stag>
        <div>
          <BadgeName>3D<span>溜溜网</span></BadgeName>
          <BadgeSite>3D66.COM</BadgeSite>
        </div>
      </Badge>
    </Shell>
  );
}
